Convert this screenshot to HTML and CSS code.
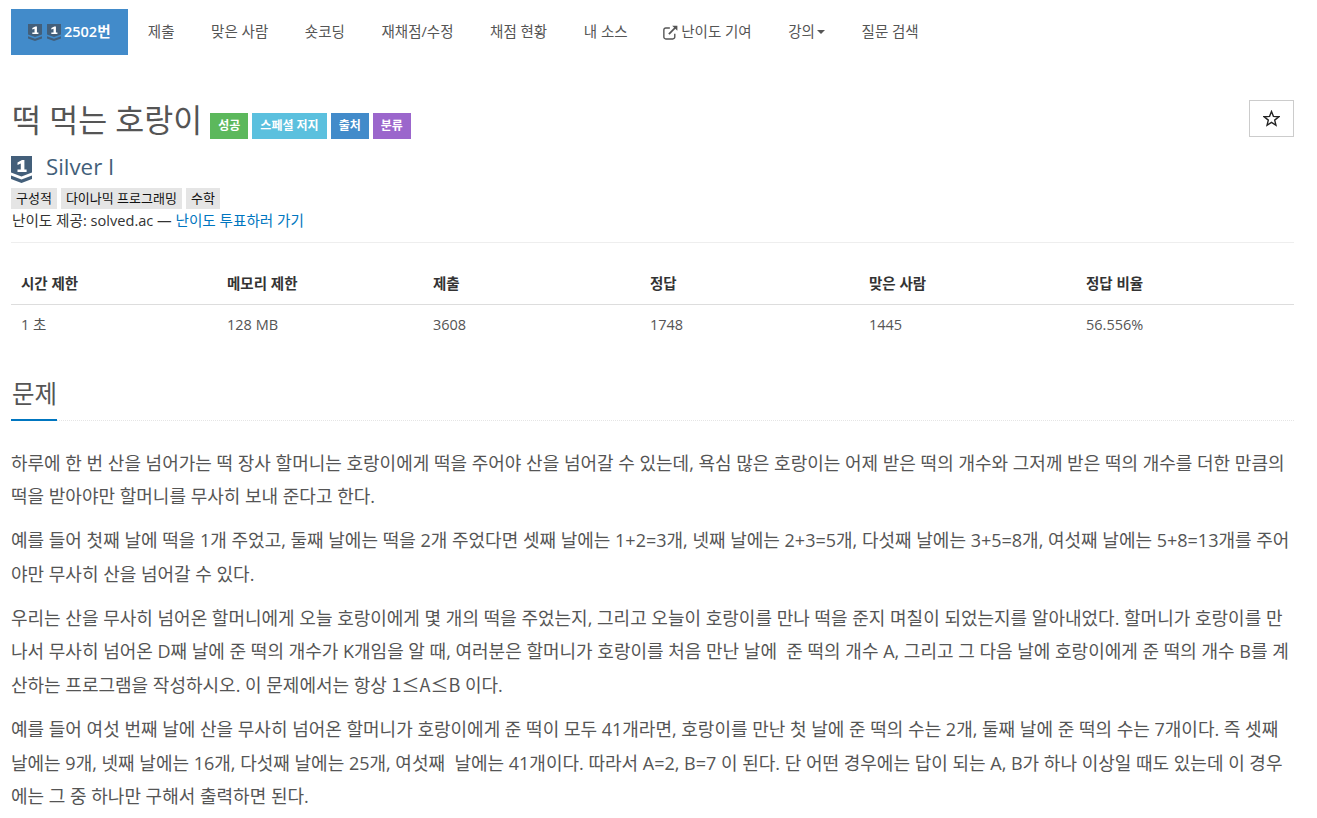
FILE: index.html
```html
<!DOCTYPE html>
<html lang="ko">
<head>
<meta charset="utf-8">
<title>2502번: 떡 먹는 호랑이</title>
<link rel="stylesheet" href="styles.css">
</head>
<body>
<svg class="defs" width="0" height="0" aria-hidden="true">
  <symbol id="tier" viewBox="0 0 21 27" preserveAspectRatio="none">
    <path fill="#435f7a" d="M0 0H21V16.5L10.5 20.5L0 16.5Z"/>
    <path fill="#435f7a" d="M0 19.5L10.5 23.5L21 19.5V23L10.5 27L0 23Z"/>
    <path fill="#fff" d="M6.5 6.5L11 4H13.4V13.5H15.6V16H6.5V13.5H9.8V7.4L6.5 8.9Z"/>
  </symbol>
</svg>
<div class="page">
  <nav class="nav">
    <a class="nav-item active"><svg class="tier-sm"><use href="#tier"/></svg><svg class="tier-sm"><use href="#tier"/></svg><span class="active-label">2502번</span></a>
    <a class="nav-item">제출</a>
    <a class="nav-item">맞은 사람</a>
    <a class="nav-item">숏코딩</a>
    <a class="nav-item">재채점/수정</a>
    <a class="nav-item">채점 현황</a>
    <a class="nav-item">내 소스</a>
    <a class="nav-item"><svg class="ext" viewBox="0 0 14 14"><path fill="none" stroke="#555" stroke-width="1.3" d="M11 8.2V11.2A1.8 1.8 0 0 1 9.2 13H2.6A1.8 1.8 0 0 1 .8 11.2V4.6A1.8 1.8 0 0 1 2.6 2.8H6.4"/><path fill="none" stroke="#555" stroke-width="1.6" d="M5.5 8.5L12.2 1.8"/><path fill="#555" d="M8.6 .6H13.4V5.4Z"/></svg>난이도 기여</a>
    <a class="nav-item">강의<span class="caret"></span></a>
    <a class="nav-item">질문 검색</a>
  </nav>

  <header class="title-row">
    <div class="title-line">
      <h1 class="title">떡 먹는 호랑이</h1>
      <span class="label green">성공</span>
      <span class="label cyan">스페셜 저지</span>
      <span class="label blue">출처</span>
      <span class="label purple">분류</span>
    </div>
    <button class="star" type="button"><svg viewBox="0 0 16 16"><path fill="none" stroke="#222" stroke-width="1.3" d="M8 1.4L9.8 6L14.9 6.3L11 9.5L12.2 14.4L8 11.7L3.8 14.4L5 9.5L1.1 6.3L6.2 6Z"/></svg></button>
  </header>

  <div class="tier-row"><svg class="tier-lg"><use href="#tier"/></svg><span class="tier-name">Silver I</span></div>
  <div class="tags"><span class="tag">구성적</span><span class="tag">다이나믹 프로그래밍</span><span class="tag">수학</span></div>
  <div class="credit">난이도 제공: solved.ac — <a class="link">난이도 투표하러 가기</a></div>

  <table class="stats">
    <thead>
      <tr><th class="c1">시간 제한</th><th class="c2">메모리 제한</th><th class="c3">제출</th><th class="c4">정답</th><th class="c5">맞은 사람</th><th>정답 비율</th></tr>
    </thead>
    <tbody>
      <tr><td>1 초</td><td>128 MB</td><td>3608</td><td>1748</td><td>1445</td><td>56.556%</td></tr>
    </tbody>
  </table>

  <section class="problem">
    <div class="headline"><h2 class="headline-text">문제</h2></div>
    <p>하루에 한 번 산을 넘어가는 떡 장사 할머니는 호랑이에게 떡을 주어야 산을 넘어갈 수 있는데, 욕심 많은 호랑이는 어제 받은 떡의 개수와 그저께 받은 떡의 개수를 더한 만큼의 떡을 받아야만 할머니를 무사히 보내 준다고 한다.</p>
    <p>예를 들어 첫째 날에 떡을 1개 주었고, 둘째 날에는 떡을 2개 주었다면 셋째 날에는 1+2=3개, 넷째 날에는 2+3=5개, 다섯째 날에는 3+5=8개, 여섯째 날에는 5+8=13개를 주어야만 무사히 산을 넘어갈 수 있다.</p>
    <p>우리는 산을 무사히 넘어온 할머니에게 오늘 호랑이에게 몇 개의 떡을 주었는지, 그리고 오늘이 호랑이를 만나 떡을 준지 며칠이 되었는지를 알아내었다. 할머니가 호랑이를 만나서 무사히 넘어온 D째 날에 준 떡의 개수가 K개임을 알 때, 여러분은 할머니가 호랑이를 처음 만난 날에&nbsp; 준 떡의 개수 A, 그리고 그 다음 날에 호랑이에게 준 떡의 개수 B를 계산하는 프로그램을 작성하시오. 이 문제에서는 항상 <span class="sym">1≤A≤B</span> 이다.</p>
    <p>예를 들어 여섯 번째 날에 산을 무사히 넘어온 할머니가 호랑이에게 준 떡이 모두 41개라면, 호랑이를 만난 첫 날에 준 떡의 수는 2개, 둘째 날에 준 떡의 수는 7개이다. 즉 셋째 날에는 9개, 넷째 날에는 16개, 다섯째 날에는 25개, 여섯째&nbsp; 날에는 41개이다. 따라서 A=2, B=7 이 된다. 단 어떤 경우에는 답이 되는 A, B가 하나 이상일 때도 있는데 이 경우에는 그 중 하나만 구해서 출력하면 된다.</p>
  </section>
</div>
</body>
</html>
```
FILE: styles.css
```css
* { box-sizing: border-box; }
html, body { margin: 0; padding: 0; }
body {
  background: #fff;
  color: #555;
  font-family: "Open Sans", "Noto Sans CJK KR", sans-serif;
  font-size: 14.5px;
  line-height: 20px;
  overflow: hidden;
  height: 818px;
}
.defs { position: absolute; }
.page { width: 1283px; margin-left: 11px; }

.nav { display: flex; margin-top: 9px; height: 46px; gap: 0; }
.nav-item { display: flex; align-items: center; padding: 0 18.3px; color: #555; white-space: nowrap; }
.nav-item.active { background: #428bca; color: #fff; padding: 0 17px; font-weight: 600; margin-right: 2px; }
.tier-sm { width: 14px; height: 17px; margin-right: 5px; }
.tier-sm + .tier-sm { margin-right: 3px; }
.ext { width: 15px; height: 15px; margin-right: 3px; margin-left: -1px; }
.caret { width: 0; height: 0; margin-left: 2px; border-top: 4px solid #555; border-left: 4px solid transparent; border-right: 4px solid transparent; }

.title-row { display: flex; justify-content: space-between; align-items: flex-start; margin-top: 45px; height: 43px; }
.title-line { display: flex; align-items: center; height: 40px; }
.title { margin: 0 8px 0 1px; font-size: 31.5px; line-height: 40px; font-weight: 400; color: #555; }
.label { display: block; height: 26px; margin-top: 11px; margin-right: 4px; padding: 0 8px; line-height: 26px; font-size: 12px; font-weight: 700; color: #fff; }
.green { background: #5cb85c; }
.cyan { background: #5bc0de; }
.blue { background: #428bca; }
.purple { background: #9b66cc; }
.star { width: 45px; height: 37px; margin: 0; padding: 0; background: #fff; border: 1px solid #ccc; display: flex; align-items: center; justify-content: center; }
.star svg { width: 17px; height: 17px; }

.tier-row { display: flex; align-items: flex-start; height: 30px; margin-top: 9px; }
.tier-lg { width: 21px; height: 27px; margin-top: 4px; }
.tier-name { margin-left: 14px; font-size: 22.3px; line-height: 30px; color: #435f7a; }
.tags { display: flex; gap: 4px; margin-top: 6px; }
.tag { background: #e5e5e5; color: #111; height: 21px; line-height: 21px; padding: 0 5px; font-size: 13px; }
.credit { color: #333; font-size: 14.6px; line-height: 20px; margin-top: 1px; padding: 0 0 12px 1px; border-bottom: 1px solid #eee; }
.link { color: #0076c0; }

.stats { width: 100%; border-collapse: separate; border-spacing: 0; margin-top: 22px; table-layout: fixed; }
.stats th { text-align: left; font-size: 14.5px; color: #333; font-weight: 700; padding: 9px 10px 10px; height: 39px; border-bottom: 1px solid #ddd; }
.stats td { color: #555; padding: 10px; height: 40px; }
.c1, .c2 { width: 206px; }
.c3 { width: 217px; }
.c4 { width: 219px; }
.c5 { width: 217px; }

.problem { margin-top: 29px; }
.headline { border-bottom: 1px dotted #e5e5e5; height: 47px; }
.headline-text { display: inline-block; margin: 0; height: 47px; padding: 0 0 0 1px; font-size: 24.5px; line-height: 40px; font-weight: 400; color: #555; border-bottom: 2px solid #0076c0; }
.problem p { margin: 0 0 10.5px; font-size: 18px; line-height: 33.4px; word-break: break-all; }
.problem .headline + p { margin-top: 26px; }
.sym { font-family: "Noto Sans CJK KR", sans-serif; }
```
